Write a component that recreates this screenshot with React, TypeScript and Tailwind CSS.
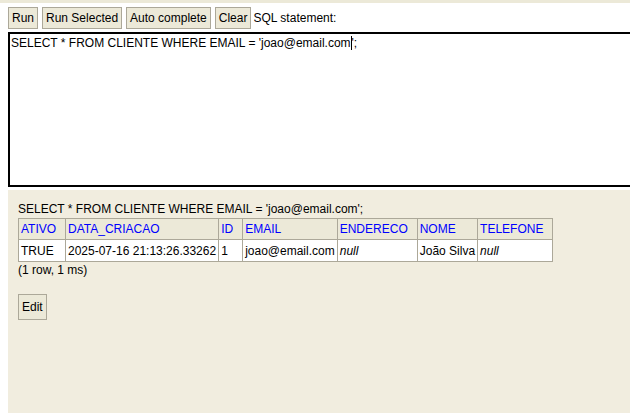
const font = { fontFamily: '"Liberation Sans", Arial, sans-serif' };

function Btn({ label }: { label: string }) {
  return (
    <button className="h-[22px] px-[3px] bg-[#ece9d8] border border-[#aca899] text-[12px] text-black leading-none">
      {label}
    </button>
  );
}

const cols = [
  { name: "ATIVO", w: "w-[47px]" },
  { name: "DATA_CRIACAO", w: "w-[153px]" },
  { name: "ID", w: "w-[24px]" },
  { name: "EMAIL", w: "w-[94px]" },
  { name: "ENDERECO", w: "w-[80px]" },
  { name: "NOME", w: "w-[60px]" },
  { name: "TELEFONE", w: "w-[75px]" },
];

export default function App() {
  return (
    <div className="w-[630px] h-[413px] bg-white overflow-hidden flex flex-col text-[12px] text-black" style={font}>
      {/* top frame edge */}
      <div className="h-[3px] bg-[#ece9d8] shrink-0" />

      {/* toolbar */}
      <div className="flex items-center gap-[4px] pl-[8px] pt-[4px] shrink-0">
        <Btn label="Run" />
        <Btn label="Run Selected" />
        <Btn label="Auto complete" />
        <Btn label="Clear" />
        <span className="-ml-[2px]">SQL statement:</span>
      </div>

      {/* sql editor */}
      <div className="ml-[8px] mt-[3px] w-[640px] h-[155px] border-2 border-black bg-white px-[1px] pt-0 shrink-0">
        <span>SELECT * FROM CLIENTE WHERE EMAIL = 'joao@email.com</span>
        <span className="inline-block w-px h-[14px] bg-black align-[-3px]" />
        <span>';</span>
      </div>

      {/* result frame */}
      <div className="ml-[8px] mt-[3px] flex-1 bg-[#f1eddf] pl-[10px] pt-[11px]">
        <div className="leading-[16px]">SELECT * FROM CLIENTE WHERE EMAIL = 'joao@email.com';</div>
        <table className="border-collapse border border-[#aca899] mt-[1px]">
          <thead>
            <tr className="h-[21px] bg-[#ece9d8]">
              {cols.map((c) => (
                <th
                  key={c.name}
                  className={`${c.w} border border-[#aca899] px-[2px] text-left font-normal text-[#0000ff]`}
                >
                  {c.name}
                </th>
              ))}
            </tr>
          </thead>
          <tbody>
            <tr className="h-[22px] bg-white">
              <td className="border border-[#aca899] px-[2px]">TRUE</td>
              <td className="border border-[#aca899] px-[2px] whitespace-nowrap">2025-07-16 21:13:26.33262</td>
              <td className="border border-[#aca899] px-[2px]">1</td>
              <td className="border border-[#aca899] px-[2px]">joao@email.com</td>
              <td className="border border-[#aca899] px-[2px] italic">null</td>
              <td className="border border-[#aca899] px-[2px] whitespace-nowrap">João Silva</td>
              <td className="border border-[#aca899] px-[2px] italic">null</td>
            </tr>
          </tbody>
        </table>
        <div className="leading-[16px]">(1 row, 1 ms)</div>
        <button className="mt-[16px] h-[26px] px-[3px] bg-[#ece9d8] border border-[#aca899] text-[12px] leading-none">
          Edit
        </button>
      </div>
    </div>
  );
}
